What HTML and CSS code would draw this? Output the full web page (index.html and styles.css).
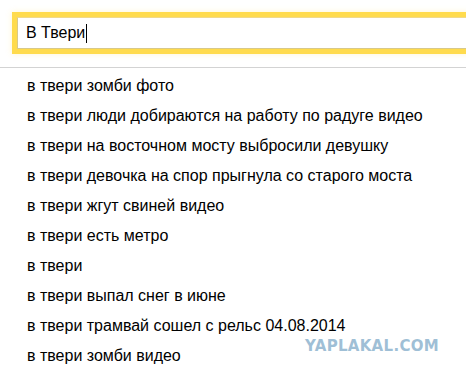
FILE: index.html
```html
<!DOCTYPE html>
<html lang="ru">
<head>
    <meta charset="UTF-8">
    <title>В Твери</title>
    <link rel="stylesheet" href="styles.css">
</head>
<body>
    <div class="search">
        <div class="search-box">
            <span class="query">В Твери</span><span class="caret"></span>
        </div>
    </div>

    <ul class="suggest">
        <li>в твери зомби фото</li>
        <li>в твери люди добираются на работу по радуге видео</li>
        <li>в твери на восточном мосту выбросили девушку</li>
        <li>в твери девочка на спор прыгнула со старого моста</li>
        <li>в твери жгут свиней видео</li>
        <li>в твери есть метро</li>
        <li>в твери</li>
        <li>в твери выпал снег в июне</li>
        <li>в твери трамвай сошел с рельс 04.08.2014</li>
        <li>в твери зомби видео</li>
    </ul>

    <div class="watermark">YAPLAKAL.COM</div>
</body>
</html>
```

FILE: styles.css
```css
* {
    margin: 0;
    padding: 0;
    box-sizing: border-box;
}

body {
    font-family: 'Liberation Sans', Arial, sans-serif;
    background: #fff;
    color: #000;
    width: 466px;
    height: 374px;
    overflow: hidden;
    position: relative;
}

.search {
    padding: 12px 0 0 12px;
    height: 68px;
    border-bottom: 1px solid #d3d3d3;
}

.search-box {
    height: 42px;
    margin-right: -20px;
    border: 5px solid #ffdb4d;
    box-shadow: 0 0 6px rgba(255, 219, 77, 0.25);
    background: #fff;
    display: flex;
    align-items: center;
    padding-left: 9px;
    font-size: 16px;
    position: relative;
}

.search-box::after {
    content: '';
    position: absolute;
    inset: 0;
    border: 1px solid #d8c98a;
    border-top-color: #f0d98a;
}

.caret {
    display: inline-block;
    width: 1px;
    height: 19px;
    background: #000;
    margin-left: 1px;
}

.suggest {
    list-style: none;
    padding-top: 3px;
}

.suggest li {
    font-size: 16px;
    line-height: 30px;
    padding-left: 27px;
}

.watermark {
    position: absolute;
    left: 305px;
    top: 337px;
    font-family: 'DejaVu Sans', sans-serif;
    font-weight: bold;
    font-size: 15px;
    color: #9fbfd6;
    letter-spacing: 0.3px;
}
```
